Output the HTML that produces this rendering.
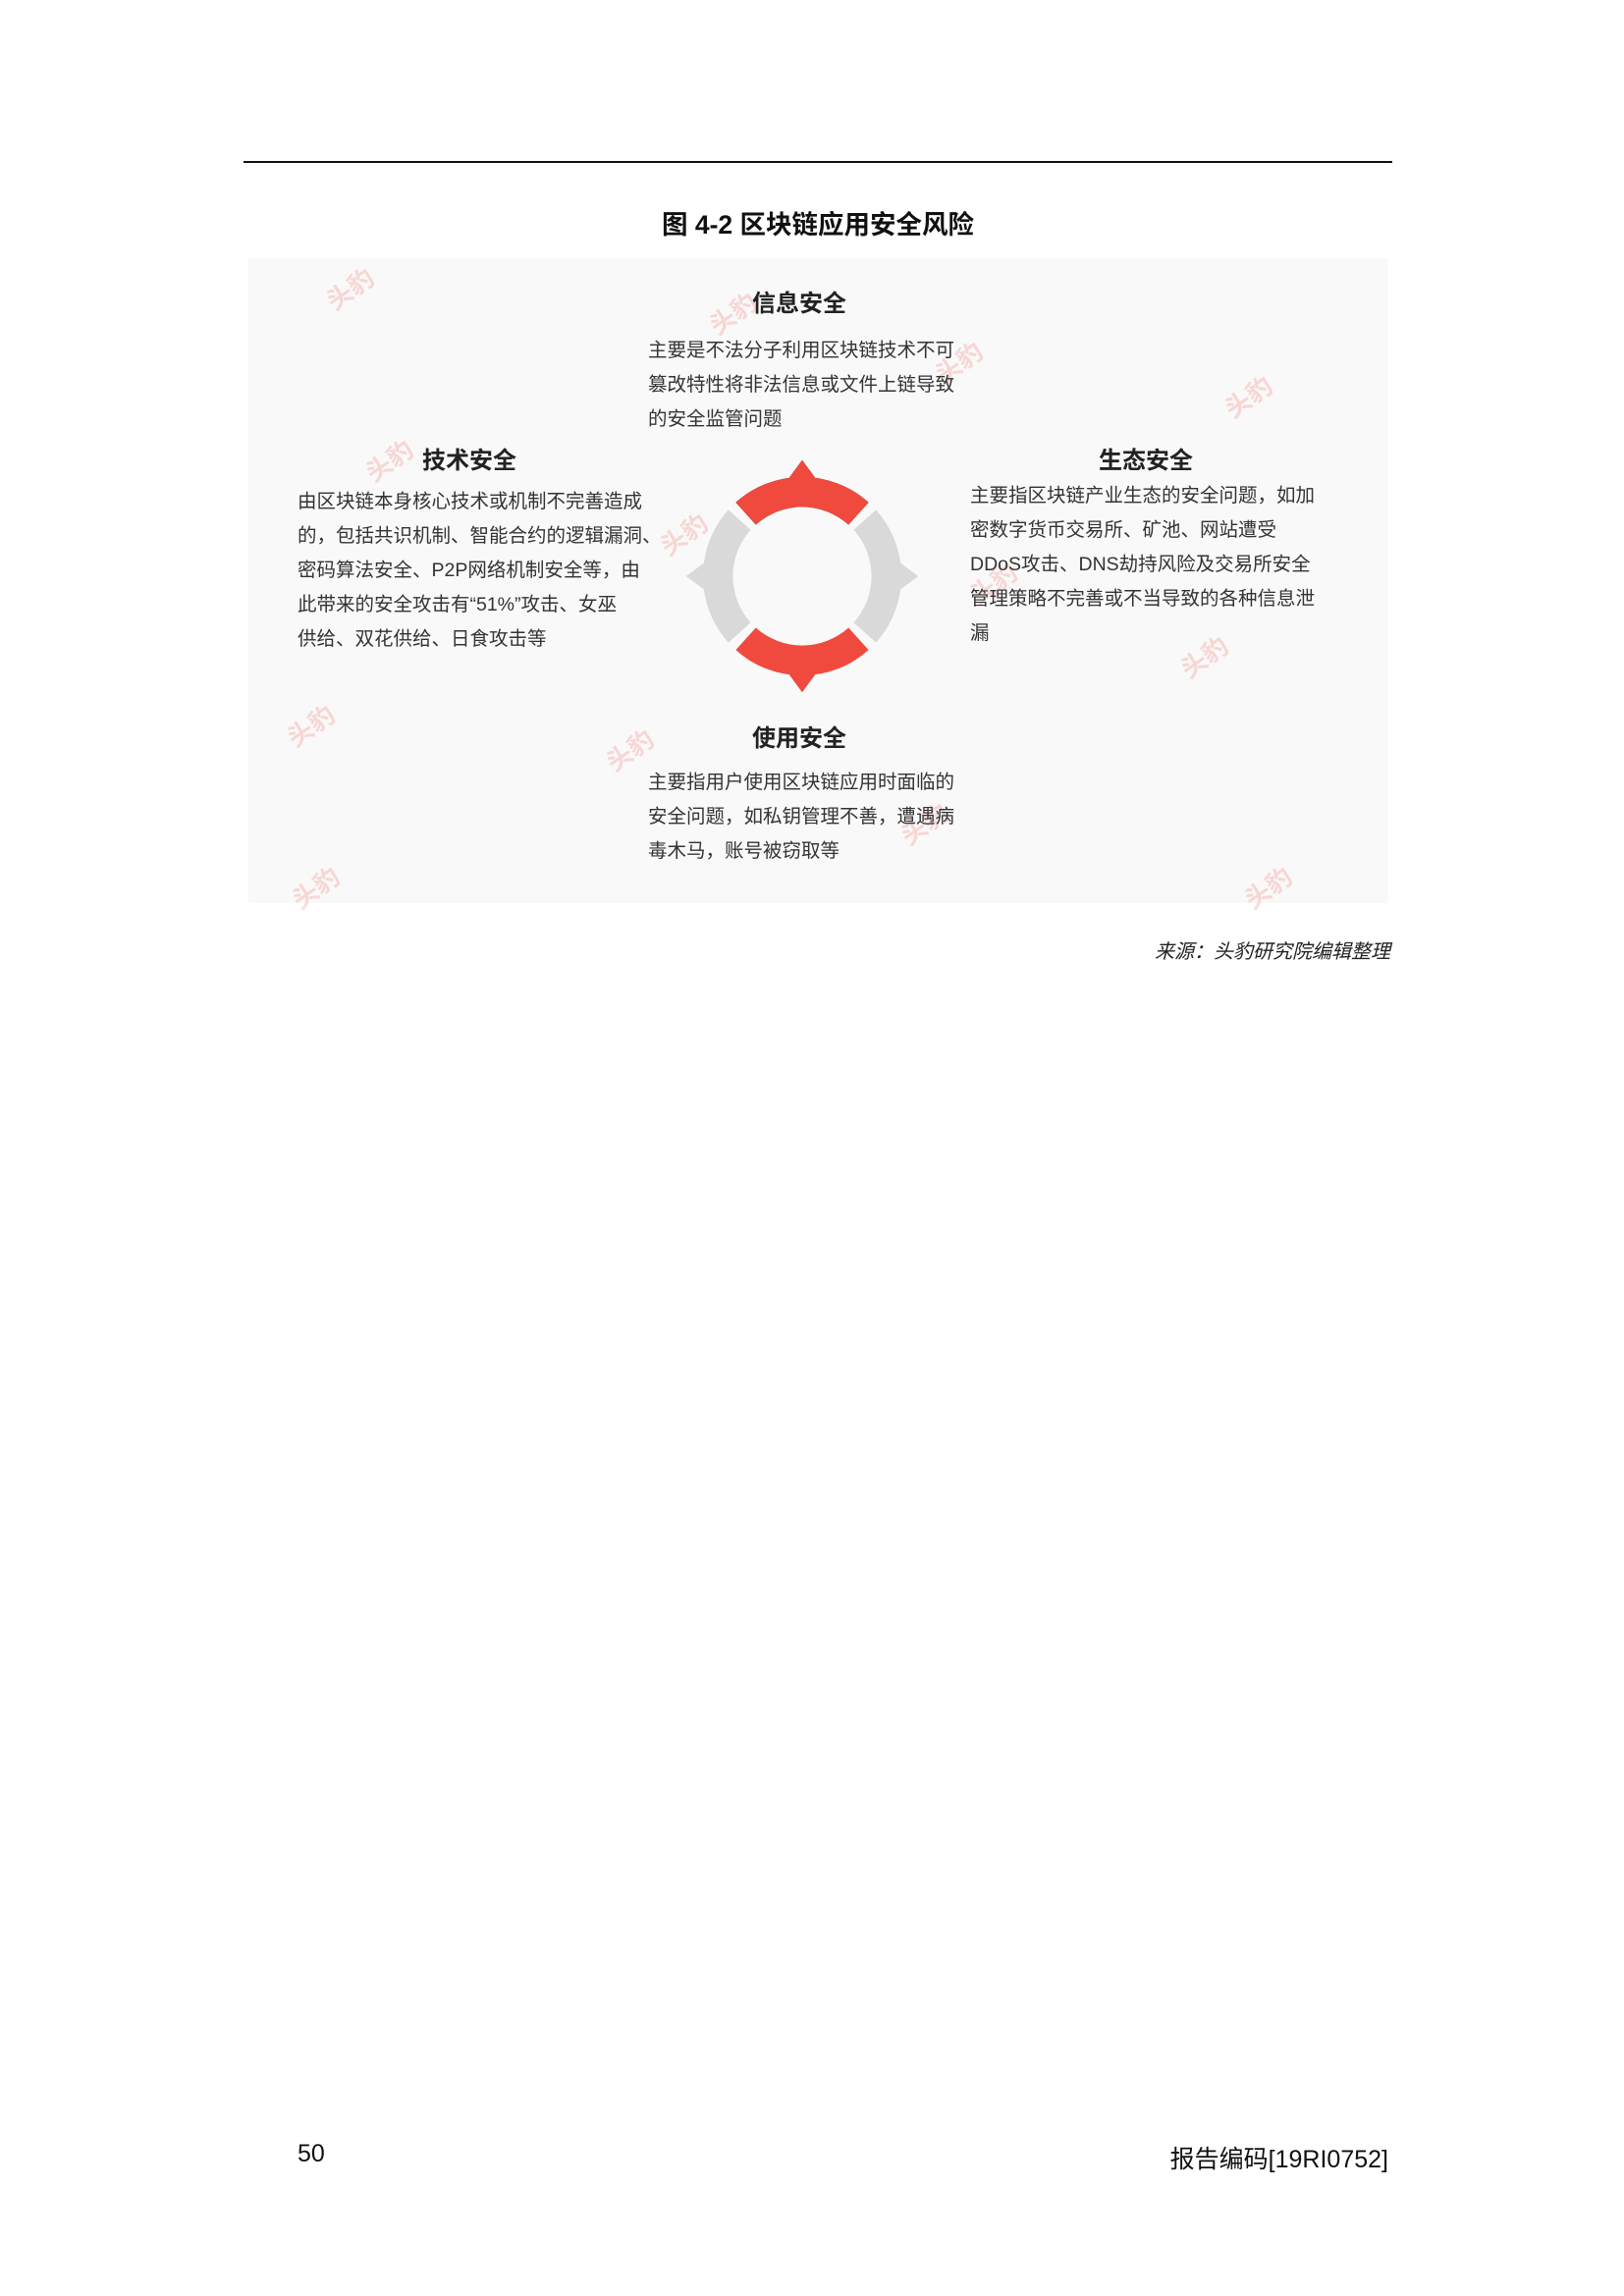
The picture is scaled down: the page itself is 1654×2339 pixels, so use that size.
<!DOCTYPE html>
<html><head><meta charset="utf-8"><style>
body{margin:0;background:#fff;}
.p{position:relative;width:1654px;height:2339px;font-family:"Liberation Sans","Noto Sans CJK SC",sans-serif;color:#333;}
.a{position:absolute;white-space:nowrap;}
.h{font-weight:bold;font-size:24px;color:#222;transform:translateX(-50%);}
.t{font-size:19.5px;line-height:35px;color:#333;}
.w{position:absolute;color:rgba(240,90,80,0.22);font-weight:bold;font-size:26px;transform:rotate(-35deg);}
</style></head><body><div class="p">
<div class="a" style="left:248px;top:164px;width:1170px;height:2px;background:#111"></div>
<div class="a" style="left:833px;top:207px;transform:translateX(-50%);font-weight:bold;font-size:26.5px;color:#111">图 4-2 区块链应用安全风险</div>
<div class="a" style="left:253px;top:263px;width:1161px;height:657px;background:#f9f9f9"></div>
<div class="w" style="left:330px;top:275px">头豹</div>
<div class="w" style="left:720px;top:300px">头豹</div>
<div class="w" style="left:950px;top:350px">头豹</div>
<div class="w" style="left:1245px;top:385px">头豹</div>
<div class="w" style="left:370px;top:450px">头豹</div>
<div class="w" style="left:670px;top:525px">头豹</div>
<div class="w" style="left:985px;top:575px">头豹</div>
<div class="w" style="left:1200px;top:650px">头豹</div>
<div class="w" style="left:290px;top:720px">头豹</div>
<div class="w" style="left:615px;top:745px">头豹</div>
<div class="w" style="left:915px;top:820px">头豹</div>
<div class="w" style="left:295px;top:885px">头豹</div>
<div class="w" style="left:1265px;top:885px">头豹</div>
<div class="a h" style="left:814px;top:289px">信息安全</div>
<div class="a t" style="left:660px;top:340px">主要是不法分子利用区块链技术不可<br>篡改特性将非法信息或文件上链导致<br>的安全监管问题</div>
<div class="a h" style="left:478px;top:449px">技术安全</div>
<div class="a t" style="left:303px;top:494px">由区块链本身核心技术或机制不完善造成<br>的，包括共识机制、智能合约的逻辑漏洞、<br>密码算法安全、P2P网络机制安全等，由<br>此带来的安全攻击有“51%”攻击、女巫<br>供给、双花供给、日食攻击等</div>
<div class="a h" style="left:1167px;top:449px">生态安全</div>
<div class="a t" style="left:988px;top:488px">主要指区块链产业生态的安全问题，如加<br>密数字货币交易所、矿池、网站遭受<br>DDoS攻击、DNS劫持风险及交易所安全<br>管理策略不完善或不当导致的各种信息泄<br>漏</div>
<div class="a h" style="left:814px;top:732px">使用安全</div>
<div class="a t" style="left:660px;top:780px">主要指用户使用区块链应用时面临的<br>安全问题，如私钥管理不善，遭遇病<br>毒木马，账号被窃取等</div>
<svg class="a" style="left:693px;top:463px" width="248" height="248" viewBox="-130 -130 260 260">
<g id="s"><path d="M -49.5 -55 L -70.9 -78.8 A106 106 0 0 1 70.9 -78.8 L 49.5 -55 A74 74 0 0 0 -49.5 -55 Z M -14 -105 L 0 -124 L 14 -105 Z"/></g>
<use href="#s" fill="#f04a3e" transform="rotate(0)"/>
<use href="#s" fill="#f04a3e" transform="rotate(180)"/>
<use href="#s" fill="#d9d9d9" transform="rotate(90)"/>
<use href="#s" fill="#d9d9d9" transform="rotate(270)"/>
</svg>
<div class="a" style="right:238px;top:953px;font-style:italic;font-size:20px;color:#222">来源：头豹研究院编辑整理</div>
<div class="a" style="left:303px;top:2180px;font-size:25px;color:#111">50</div>
<div class="a" style="right:240px;top:2180px;font-size:25px;color:#111">报告编码[19RI0752]</div>
</div></body></html>
